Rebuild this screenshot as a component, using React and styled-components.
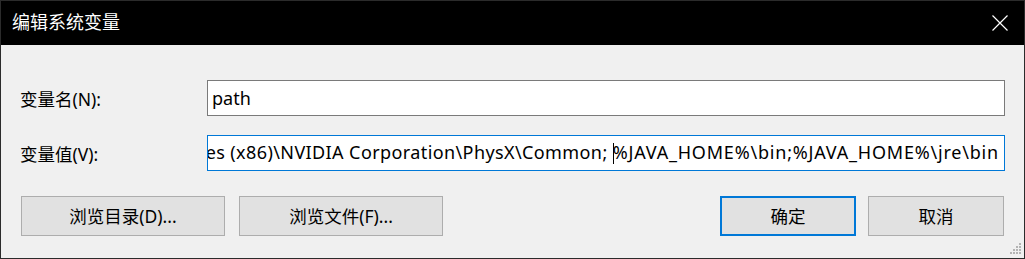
import React from "react";
import styled, { createGlobalStyle } from "styled-components";

const Global = createGlobalStyle`
  html, body { margin: 0; padding: 0; background: #f0f0f0; }
  * { box-sizing: border-box; }
`;

const FONT = `"Noto Sans", "Noto Sans CJK SC", sans-serif`;

const Window = styled.div`
  width: 1025px;
  height: 259px;
  border: 1px solid #2b2b2b;
  background: #f0f0f0;
  display: flex;
  flex-direction: column;
  position: relative;
  font-family: ${FONT};
  overflow: hidden;
`;

const TitleBar = styled.div`
  height: 44px;
  flex: 0 0 44px;
  background: #000;
  color: #fff;
  display: flex;
  align-items: center;
  justify-content: space-between;
  padding: 0 16px 1px 11px;
`;

const Title = styled.span`
  font-size: 18px;
  line-height: 20px;
  margin-top: -1px;
`;

const CloseIcon = styled.svg`
  width: 16px;
  height: 16px;
  display: block;
`;

const Body = styled.div`
  flex: 1;
  padding: 35px 19px 0 19px;
  display: flex;
  flex-direction: column;
`;

const FieldRow = styled.div`
  display: grid;
  grid-template-columns: 187px 1fr;
  align-items: center;
  height: 36px;
  margin-bottom: ${(p) => p.$gap}px;
`;

const Label = styled.label`
  font-size: 17.5px;
  color: #000;
  line-height: 20px;
  padding-top: 1px;
`;

const TextBox = styled.div`
  height: 36px;
  border: 1px solid ${(p) => (p.$focused ? "#0078d7" : "#7a7a7a")};
  background: #fff;
  display: flex;
  align-items: center;
  justify-content: ${(p) => (p.$scrolled ? "flex-end" : "flex-start")};
  padding: 0 5px 0 4px;
  overflow: hidden;
  font-size: 18px;
  color: #000;
  white-space: nowrap;
`;

const BoxText = styled.span`
  flex: 0 0 auto;
  line-height: 22px;
  padding-bottom: 1px;
`;

const Segment = styled.span`
  letter-spacing: ${(p) => p.$spacing}px;
`;

const Caret = styled.span`
  display: inline-block;
  width: 1px;
  height: 21px;
  background: #000;
  vertical-align: -5px;
  margin: 0 -1px 0 0;
`;

const ButtonRow = styled.div`
  display: flex;
  align-items: center;
  padding-left: 1px;
`;

const Button = styled.button`
  width: ${(p) => p.$w}px;
  height: 40px;
  margin-right: ${(p) => p.$mr || 0}px;
  margin-left: ${(p) => p.$ml || 0}px;
  background: #e1e1e1;
  border: ${(p) => (p.$default ? "2px solid #0078d7" : "1px solid #adadad")};
  font-family: ${FONT};
  font-size: 17.5px;
  color: #000;
  padding: 0;
  display: flex;
  align-items: center;
  justify-content: center;
  line-height: 20px;
`;

const Grip = styled.svg`
  position: absolute;
  right: 2px;
  bottom: 3px;
  width: 12px;
  height: 12px;
`;

export default function App() {
  const dots = [
    [9, 0],
    [6, 3], [9, 3],
    [3, 6], [6, 6], [9, 6],
    [0, 9], [3, 9], [6, 9], [9, 9],
  ];
  return (
    <>
      <Global />
      <Window>
        <TitleBar>
          <Title>编辑系统变量</Title>
          <CloseIcon viewBox="0 0 16 16">
            <path d="M0.5 0.5 L15.5 15.5 M15.5 0.5 L0.5 15.5" stroke="#fff" strokeWidth="1.2" fill="none" />
          </CloseIcon>
        </TitleBar>
        <Body>
          <FieldRow $gap={19}>
            <Label>变量名(N):</Label>
            <TextBox>
              <BoxText>path</BoxText>
            </TextBox>
          </FieldRow>
          <FieldRow $gap={25}>
            <Label>变量值(V):</Label>
            <TextBox $focused $scrolled>
              <BoxText>
                <Segment $spacing={0.4}>C:\Program Files (x86)\NVIDIA Corporation\PhysX\Common; </Segment>
                <Caret />
                <Segment $spacing={0.8}>%JAVA_HOME%\bin;%JAVA_HOME%\jre\bin</Segment>
              </BoxText>
            </TextBox>
          </FieldRow>
          <ButtonRow>
            <Button $w={204} $mr={14}>浏览目录(D)...</Button>
            <Button $w={204}>浏览文件(F)...</Button>
            <Button $w={136} $ml={277} $mr={12} $default>确定</Button>
            <Button $w={136}>取消</Button>
          </ButtonRow>
        </Body>
        <Grip viewBox="0 0 12 12">
          {dots.map(([x, y], i) => (
            <rect key={i} x={x} y={y} width="2" height="2" fill="#b4b4b4" />
          ))}
        </Grip>
      </Window>
    </>
  );
}
